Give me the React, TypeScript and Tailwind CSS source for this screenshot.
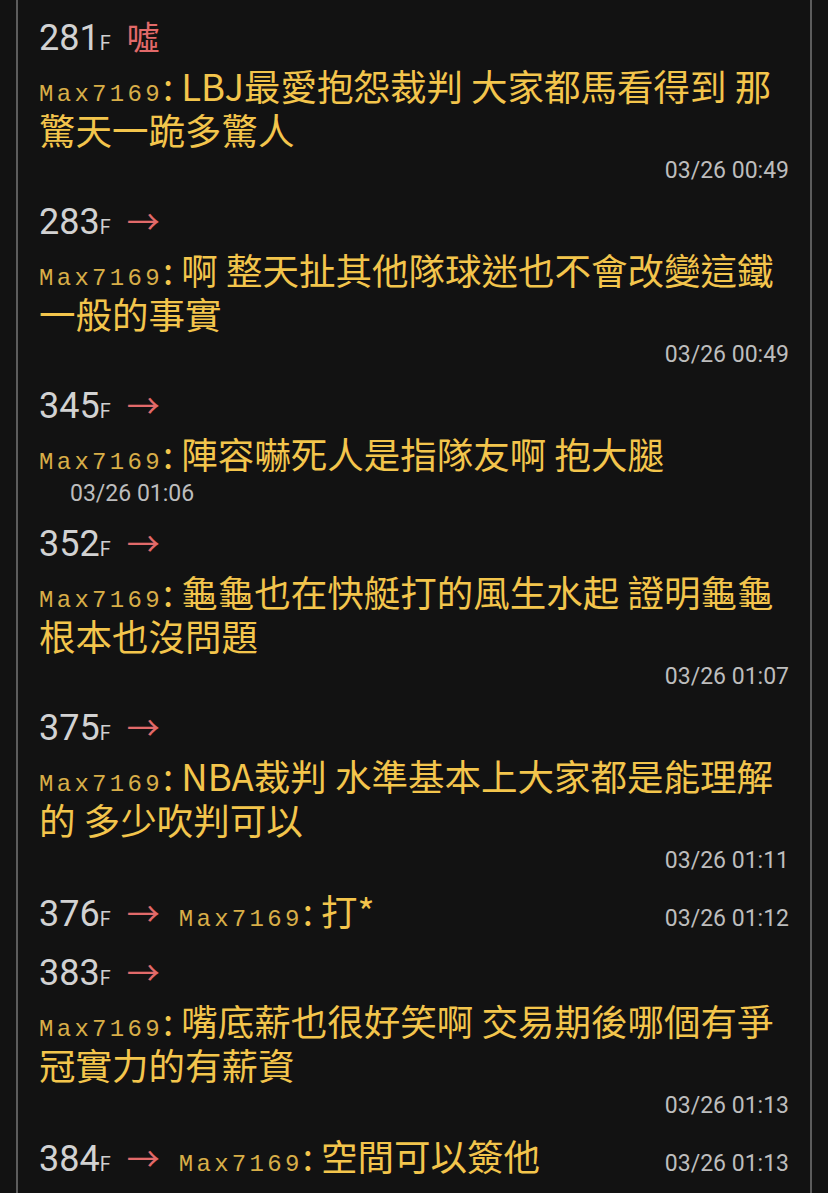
import React from 'react';

type Push = {
  floor: string;
  tag: string;
  lines: string[];
  time: string;
  mode?: 'block' | 'wrapTime' | 'inline';
};

const pushes: Push[] = [
  { floor: '281', tag: '噓', lines: ['LBJ最愛抱怨裁判 大家都馬看得到 那', '驚天一跪多驚人'], time: '03/26 00:49' },
  { floor: '283', tag: '→', lines: ['啊 整天扯其他隊球迷也不會改變這鐵', '一般的事實'], time: '03/26 00:49' },
  { floor: '345', tag: '→', lines: ['陣容嚇死人是指隊友啊 抱大腿'], time: '03/26 01:06', mode: 'wrapTime' },
  { floor: '352', tag: '→', lines: ['龜龜也在快艇打的風生水起 證明龜龜', '根本也沒問題'], time: '03/26 01:07' },
  { floor: '375', tag: '→', lines: ['NBA裁判 水準基本上大家都是能理解', '的 多少吹判可以'], time: '03/26 01:11' },
  { floor: '376', tag: '→', lines: ['打*'], time: '03/26 01:12', mode: 'inline' },
  { floor: '383', tag: '→', lines: ['嘴底薪也很好笑啊 交易期後哪個有爭', '冠實力的有薪資'], time: '03/26 01:13' },
  { floor: '384', tag: '→', lines: ['空間可以簽他'], time: '03/26 01:13', mode: 'inline' },
];

const roboto = "font-['Roboto','Noto_Sans',sans-serif]";
const cjk = "font-['Noto_Sans_CJK_TC','Noto_Sans',sans-serif]";
const mono = "font-['Liberation_Mono','DejaVu_Sans_Mono',monospace]";

const Floor = ({ p }: { p: Push }) => (
  <>
    <span className={`${roboto} text-[36px] leading-none text-[#d2d2d2]`}>{p.floor}</span>
    <span className={`${roboto} text-[20px] leading-none text-[#cfcfcf]`}>F</span>
    <span className={`${cjk} ml-[16px] text-[33px] leading-none text-[#e26a6a]`}>{p.tag}</span>
  </>
);

const User = () => (
  <span className={`${mono} text-[24px] leading-none tracking-[3.3px] text-[#d8ae48]`}>Max7169</span>
);

const Time = ({ t }: { t: string }) => (
  <span className={`${roboto} text-[23px] leading-none text-[#bdbdbd]`}>{t}</span>
);

const Entry = ({ p }: { p: Push }) => {
  if (p.mode === 'inline') {
    return (
      <div className="mb-[15px] flex h-[46px] items-center">
        <div className="flex w-full items-baseline justify-between whitespace-nowrap">
          <div className="flex items-baseline">
            <Floor p={p} />
            <span className="ml-[19px]">
              <User />
            </span>
            <span className={`${cjk} text-[36.5px] leading-none text-[#f3c54c]`}>: {p.lines[0]}</span>
          </div>
          <Time t={p.time} />
        </div>
      </div>
    );
  }
  return (
    <div className="mb-[11px]">
      <div className="flex h-[46px] items-center">
        <div className="flex items-baseline">
          <Floor p={p} />
        </div>
      </div>
      <div className={`${cjk} mt-[3px] text-[36.5px] leading-[44px] text-[#f3c54c]`}>
        {p.lines.map((l, i) => (
          <div key={i} className="h-[44px] whitespace-nowrap">
            {i === 0 ? (
              <>
                <User />
                <span>: {l}</span>
              </>
            ) : (
              l
            )}
          </div>
        ))}
      </div>
      {p.mode === 'wrapTime' ? (
        <div className="flex h-[34px] items-center pl-[31px]">
          <Time t={p.time} />
        </div>
      ) : (
        <div className="flex h-[36px] items-center justify-end">
          <Time t={p.time} />
        </div>
      )}
    </div>
  );
};

export default function App() {
  return (
    <div className="min-h-screen w-full overflow-hidden bg-[#121212]">
      <div className="ml-[16px] h-[1193px] w-[796px] border-x-2 border-[#5c5c5c] px-[21px] pt-[15px]">
        {pushes.map((p) => (
          <Entry key={p.floor} p={p} />
        ))}
      </div>
    </div>
  );
}
